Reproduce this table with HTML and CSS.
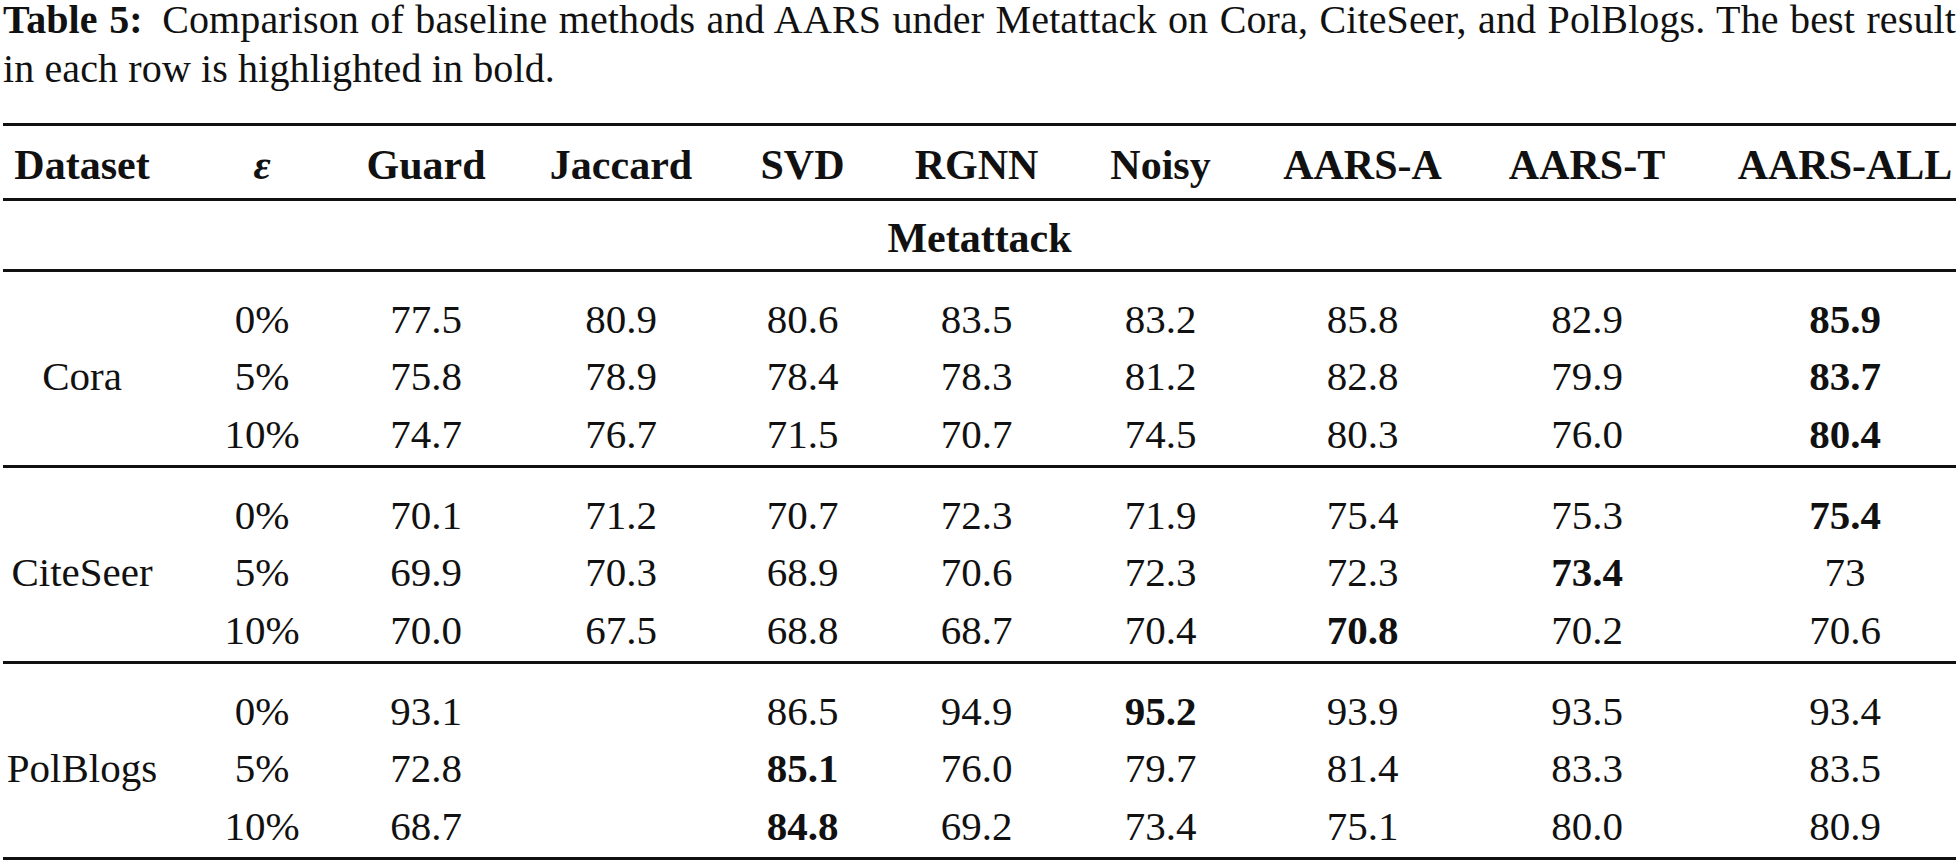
FILE: index.html
```html
<!DOCTYPE html>
<html lang="en">
<head>
<meta charset="utf-8">
<title>Table 5</title>
<link rel="stylesheet" href="styles.css">
</head>
<body>
<div class="page">
  <p class="caption"><b class="label">Table 5:</b> Comparison of baseline methods and AARS under Metattack on Cora, CiteSeer, and PolBlogs. The best result in each row is highlighted in bold.</p>
  <div class="table">
    <div class="cols head">
      <div>Dataset</div><div><i>ε</i></div><div>Guard</div><div>Jaccard</div><div>SVD</div><div>RGNN</div><div>Noisy</div><div>AARS-A</div><div>AARS-T</div><div>AARS-ALL</div>
    </div>
    <div class="group">Metattack</div>
    <div class="cols section">
      <div class="ds">Cora</div>
      <div>0%</div><div>77.5</div><div>80.9</div><div>80.6</div><div>83.5</div><div>83.2</div><div>85.8</div><div>82.9</div><div><b>85.9</b></div>
      <div>5%</div><div>75.8</div><div>78.9</div><div>78.4</div><div>78.3</div><div>81.2</div><div>82.8</div><div>79.9</div><div><b>83.7</b></div>
      <div>10%</div><div>74.7</div><div>76.7</div><div>71.5</div><div>70.7</div><div>74.5</div><div>80.3</div><div>76.0</div><div><b>80.4</b></div>
    </div>
    <div class="cols section">
      <div class="ds">CiteSeer</div>
      <div>0%</div><div>70.1</div><div>71.2</div><div>70.7</div><div>72.3</div><div>71.9</div><div>75.4</div><div>75.3</div><div><b>75.4</b></div>
      <div>5%</div><div>69.9</div><div>70.3</div><div>68.9</div><div>70.6</div><div>72.3</div><div>72.3</div><div><b>73.4</b></div><div>73</div>
      <div>10%</div><div>70.0</div><div>67.5</div><div>68.8</div><div>68.7</div><div>70.4</div><div><b>70.8</b></div><div>70.2</div><div>70.6</div>
    </div>
    <div class="cols section">
      <div class="ds">PolBlogs</div>
      <div>0%</div><div>93.1</div><div></div><div>86.5</div><div>94.9</div><div><b>95.2</b></div><div>93.9</div><div>93.5</div><div>93.4</div>
      <div>5%</div><div>72.8</div><div></div><div><b>85.1</b></div><div>76.0</div><div>79.7</div><div>81.4</div><div>83.3</div><div>83.5</div>
      <div>10%</div><div>68.7</div><div></div><div><b>84.8</b></div><div>69.2</div><div>73.4</div><div>75.1</div><div>80.0</div><div>80.9</div>
    </div>
  </div>
</div>
</body>
</html>
```

FILE: styles.css
```css
html, body {
  margin: 0;
  padding: 0;
  background: #ffffff;
  overflow: hidden;
}

body {
  color: #111111;
  font-family: "Liberation Serif", "Times New Roman", serif;
}

.page {
  padding-left: 3px;
}

.caption {
  margin: -5px 0 0;
  font-size: 40px;
  line-height: 49px;
  letter-spacing: 0.12px;
  text-align: justify;
}

.caption .label {
  margin-right: 8px;
}

.table {
  margin-top: 29.5px;
  border-top: 3px solid #111111;
}

.cols {
  display: grid;
  grid-template-columns: 189px 140px 188px 206px 153px 195px 173px 231px 218px 260px;
}

.cols > div {
  display: flex;
  align-items: center;
  justify-content: center;
  white-space: nowrap;
}

.head {
  height: 75px;
  box-sizing: border-box;
  padding-top: 6px;
  border-bottom: 3px solid #111111;
  font-size: 42px;
  font-weight: bold;
}

.head > div:nth-child(1) {
  padding-right: 31px;
}

.head > div:nth-child(4) {
  padding-right: 4px;
}

.head > div:nth-child(10) {
  padding-left: 38px;
}

.head i {
  font-style: italic;
}

.group {
  height: 71px;
  box-sizing: border-box;
  padding-top: 6px;
  border-bottom: 3px solid #111111;
  display: flex;
  align-items: center;
  justify-content: center;
  font-size: 42px;
  font-weight: bold;
}

.section {
  height: 196px;
  box-sizing: border-box;
  padding-top: 18.5px;
  border-bottom: 3px solid #111111;
  grid-template-rows: repeat(3, 57.5px);
  font-size: 41px;
}

.section .ds {
  grid-row: span 3;
  padding-right: 31px;
}

.section > div:nth-child(9n+4) {
  padding-right: 4px;
}

.section > div:nth-child(9n+10) {
  padding-left: 38px;
}
```
